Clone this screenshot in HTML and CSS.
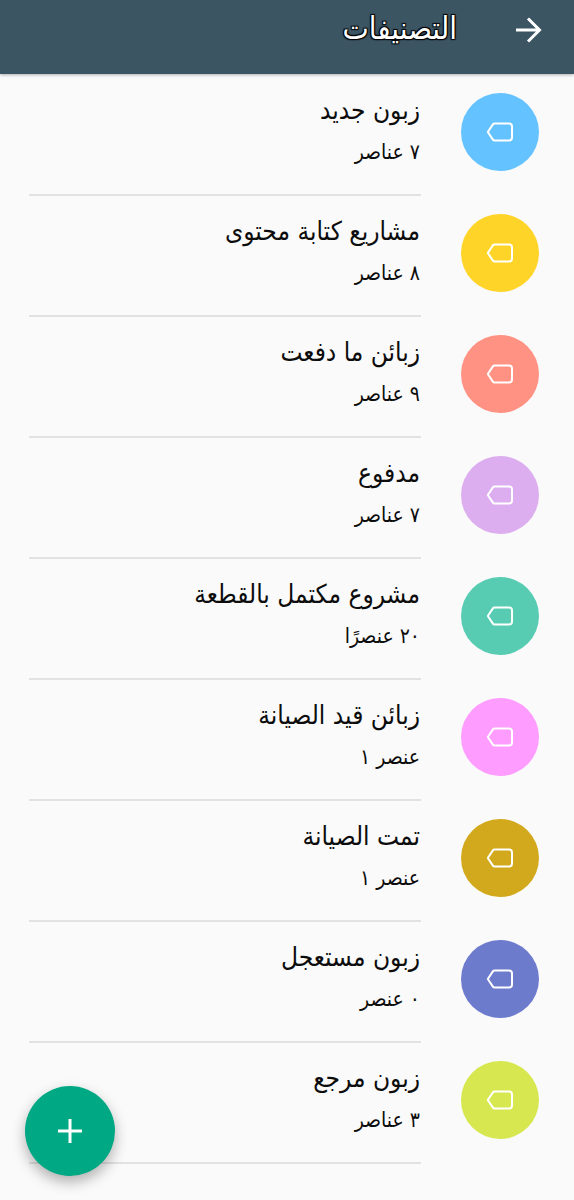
FILE: index.html
```html
<!DOCTYPE html>
<html lang="ar" dir="rtl">
<head>
<meta charset="utf-8">
<meta name="viewport" content="width=device-width, initial-scale=1">
<title>التصنيفات</title>
<link rel="stylesheet" href="styles.css">
</head>
<body>
<svg class="defs" aria-hidden="true">
  <symbol id="tag" viewBox="0 0 28 20">
    <path d="M8.500 1.500H23a3 3 0 0 1 3 3v11a3 3 0 0 1-3 3H8.500q-1 0-1.600-.9L1.800 10l5.100-7.600q.6-.9 1.600-.9z"/>
  </symbol>
</svg>
<header class="bar">
  <button class="back" type="button" aria-label="رجوع">
    <svg class="back-icon" viewBox="0 0 28 26" aria-hidden="true"><path d="M1 13h24M13 1.500l11.500 11.500L13 24.500"/></svg>
  </button>
  <h1 class="title">التصنيفات</h1>
</header>
<main>
  <ul class="list">
    <li class="item"><span class="dot sky"><svg class="tag" aria-hidden="true"><use href="#tag"/></svg></span><div class="text"><h2 class="name">زبون جديد</h2><p class="count">٧ عناصر</p></div></li>
    <li class="item"><span class="dot yellow"><svg class="tag" aria-hidden="true"><use href="#tag"/></svg></span><div class="text"><h2 class="name">مشاريع كتابة محتوى</h2><p class="count">٨ عناصر</p></div></li>
    <li class="item"><span class="dot coral"><svg class="tag" aria-hidden="true"><use href="#tag"/></svg></span><div class="text"><h2 class="name">زبائن ما دفعت</h2><p class="count">٩ عناصر</p></div></li>
    <li class="item"><span class="dot lilac"><svg class="tag" aria-hidden="true"><use href="#tag"/></svg></span><div class="text"><h2 class="name">مدفوع</h2><p class="count">٧ عناصر</p></div></li>
    <li class="item"><span class="dot teal"><svg class="tag" aria-hidden="true"><use href="#tag"/></svg></span><div class="text"><h2 class="name">مشروع مكتمل بالقطعة</h2><p class="count">٢٠ عنصرًا</p></div></li>
    <li class="item"><span class="dot pink"><svg class="tag" aria-hidden="true"><use href="#tag"/></svg></span><div class="text"><h2 class="name">زبائن قيد الصيانة</h2><p class="count">عنصر ١</p></div></li>
    <li class="item"><span class="dot gold"><svg class="tag" aria-hidden="true"><use href="#tag"/></svg></span><div class="text"><h2 class="name">تمت الصيانة</h2><p class="count">عنصر ١</p></div></li>
    <li class="item"><span class="dot indigo"><svg class="tag" aria-hidden="true"><use href="#tag"/></svg></span><div class="text"><h2 class="name">زبون مستعجل</h2><p class="count">٠ عنصر</p></div></li>
    <li class="item"><span class="dot lime"><svg class="tag" aria-hidden="true"><use href="#tag"/></svg></span><div class="text"><h2 class="name">زبون مرجع</h2><p class="count">٣ عناصر</p></div></li>
  </ul>
</main>
<button class="add" type="button" aria-label="إضافة تصنيف">
  <svg class="add-icon" viewBox="0 0 24 24" aria-hidden="true"><path d="M12 0v24M0 12h24"/></svg>
</button>
</body>
</html>
```
FILE: styles.css
```css
* { box-sizing: border-box; }
body {
  margin: 0;
  min-height: 100vh;
  background: #fafafa;
  color: #0c0c0c;
  font-family: "DejaVu Sans Condensed", "DejaVu Sans", sans-serif;
}
.defs { position: absolute; width: 0; height: 0; }
.bar {
  display: flex;
  gap: 58px;
  height: 74px;
  padding: 0 31px;
  background: #3b5563;
  box-shadow: 0 1px 3px rgba(0, 0, 0, .3);
}
.back {
  display: flex;
  align-items: center;
  height: 60px;
  padding: 0;
  border: 0;
  background: none;
}
.back-icon { width: 28px; height: 26px; fill: none; stroke: #fff; stroke-width: 3; }
.title {
  margin: 0;
  color: #fff;
  font-size: 31px;
  font-weight: 400;
  line-height: 56px;
  text-shadow: 1px 1px 1px #000, -1px -1px 1px #000, 1px -1px 1px #000, -1px 1px 1px #000;
}
.list { margin: 0; padding: 1px 0 0; list-style: none; }
.item { display: flex; gap: 40px; padding: 0 35px 0 29px; }
.dot {
  display: flex;
  flex: none;
  align-items: center;
  justify-content: center;
  width: 78px;
  height: 78px;
  margin-top: 18px;
  border-radius: 50%;
}
.tag { width: 28px; height: 20px; fill: none; stroke: #fff; stroke-width: 2; stroke-linejoin: round; }
.text { flex: 1; height: 121px; padding: 14px 1px 0; border-bottom: 2px solid #e2e2e2; }
.name, .count { margin: 0; font-weight: 400; line-height: 42px; }
.name { font-size: 26px; }
.count { font-size: 21px; }
.sky { background: #64c3ff; }
.yellow { background: #ffd428; }
.coral { background: #ff9282; }
.lilac { background: #ddaeef; }
.teal { background: #57ccb3; }
.pink { background: #ff9cff; }
.gold { background: #d2a81c; }
.indigo { background: #6d7bcd; }
.lime { background: #d7e750; }
.add {
  position: fixed;
  bottom: 24px;
  left: 25px;
  display: grid;
  place-items: center;
  width: 90px;
  height: 90px;
  padding: 0;
  border: 0;
  border-radius: 50%;
  background: #00a884;
  box-shadow: 0 6px 14px rgba(0, 0, 0, .3);
}
.add-icon { width: 24px; height: 24px; stroke: #fff; stroke-width: 3; }
```
